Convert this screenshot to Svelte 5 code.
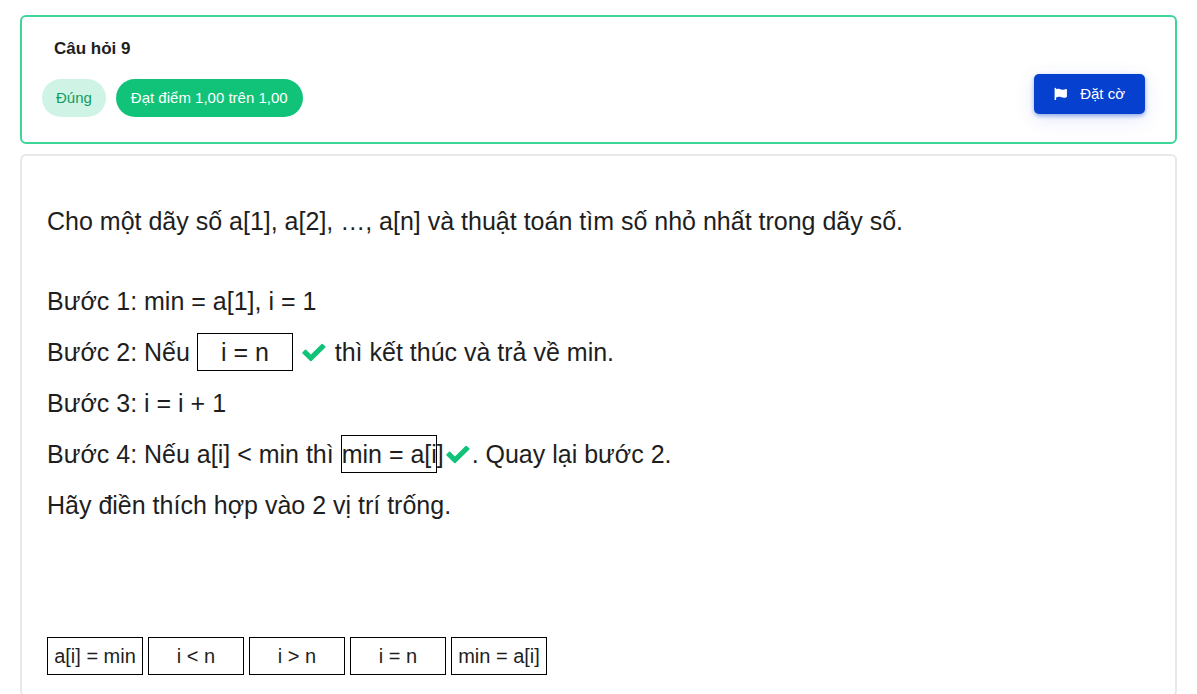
<script>
  const choices = ['a[i] = min', 'i < n', 'i > n', 'i = n', 'min = a[i]'];
</script>

{#snippet check()}
  <svg class="check" viewBox="0 0 24 19" role="img" aria-label="Đúng">
    <path d="M0.5 10.5 Q0 9.8 0.5 9.2 L3 6.8 Q3.5 6.3 4.1 6.8 L8.9 11.4 L19.5 0.9 Q20.1 0.4 20.7 0.9 L23.3 3.3 Q23.8 3.9 23.3 4.5 L9.6 17.9 Q8.9 18.5 8.2 17.9 Z" fill="#11c379" />
  </svg>
{/snippet}

<main>
  <header class="card info">
    <div class="summary">
      <h1>Câu hỏi 9</h1>
      <div class="badges">
        <span class="badge state">Đúng</span>
        <span class="badge grade">Đạt điểm 1,00 trên 1,00</span>
      </div>
    </div>
    <button class="flag" type="button">
      <svg viewBox="0 0 14 14" aria-hidden="true">
        <path d="M0.6 1.4 Q0.6 0.8 1.3 0.8 Q2.1 0.8 2.1 1.6 L2.1 2.3 C4 1.5 5.6 1.8 7.1 2.4 C8.8 3.1 10.5 2.8 12.2 2.1 Q12.9 1.9 12.9 2.6 L12.9 9.4 Q12.9 9.9 12.4 10.2 C10.7 11 9 10.9 7.4 10.3 C5.7 9.7 3.8 9.7 2.1 10.5 L2.1 13 L0.6 13 Z" fill="currentColor" />
      </svg>
      Đặt cờ
    </button>
  </header>

  <section class="card question">
    <p class="intro">Cho một dãy số a[1], a[2], …, a[n] và thuật toán tìm số nhỏ nhất trong dãy số.</p>
    <p>Bước 1: min = a[1], i = 1</p>
    <p>Bước 2: Nếu <span class="drop">i = n</span>&nbsp;{@render check()} thì kết thúc và trả về min.</p>
    <p>Bước 3: i = i + 1</p>
    <p>Bước 4: Nếu a[i] &lt; min thì <span class="drop">min = a[i]</span>&nbsp;{@render check()}. Quay lại bước 2.</p>
    <p>Hãy điền thích hợp vào 2 vị trí trống.</p>
    <ul>
      {#each choices as choice}
        <li>{choice}</li>
      {/each}
    </ul>
  </section>
</main>

<style>
  :global(body) {
    margin: 0;
    background: #fff;
  }
  main {
    display: flex;
    flex-direction: column;
    gap: 10px;
    padding: 15px 20px 0;
    font-family: "Liberation Sans", Arial, sans-serif;
    color: #1e1e1e;
  }
  .card {
    border: 2px solid #e8e8e8;
    border-radius: 6px;
  }
  .info {
    display: flex;
    align-items: flex-start;
    justify-content: space-between;
    padding: 20px 30px 25px 20px;
    border-color: #3dd598;
  }
  h1 {
    margin: 0 0 18px 12px;
    font-size: 17px;
    line-height: 24px;
    font-weight: 700;
  }
  .badges {
    display: flex;
    gap: 10px;
  }
  .badge {
    padding: 0 14px;
    border-radius: 19px;
    font-size: 15px;
    line-height: 38px;
  }
  .state {
    background: #cff3e4;
    color: #0f9c61;
  }
  .grade {
    padding: 0 15px;
    background: #11c379;
    color: #fff;
  }
  .flag {
    display: flex;
    align-items: center;
    gap: 12px;
    height: 40px;
    margin-top: 37px;
    padding: 0 20px 1px;
    border: 0;
    border-radius: 5px;
    background: #0640cf;
    color: #fff;
    font: 15px "Liberation Sans", Arial, sans-serif;
    box-shadow: 0 2px 4px rgba(6, 64, 207, 0.4), 0 5px 20px rgba(6, 64, 207, 0.12);
  }
  .flag svg {
    width: 14px;
    height: 14px;
  }
  .question {
    padding: 40px 25px 20px;
    font-size: 25px;
  }
  p {
    margin: 0;
    line-height: 51px;
  }
  .intro {
    margin-bottom: 29px;
  }
  .drop {
    display: inline-block;
    box-sizing: border-box;
    width: 96px;
    height: 38px;
    border: 1px solid #000;
    line-height: 36px;
    text-align: center;
    white-space: nowrap;
  }
  .check {
    width: 24px;
    height: 19px;
    margin: 0 2px;
    vertical-align: -1px;
  }
  ul {
    display: flex;
    flex-wrap: wrap;
    gap: 5px;
    margin: 106px 0 0;
    padding: 0;
    list-style: none;
  }
  li {
    box-sizing: border-box;
    width: 96px;
    border: 1px solid #000;
    font-size: 20px;
    line-height: 36px;
    text-align: center;
    white-space: nowrap;
  }
</style>
